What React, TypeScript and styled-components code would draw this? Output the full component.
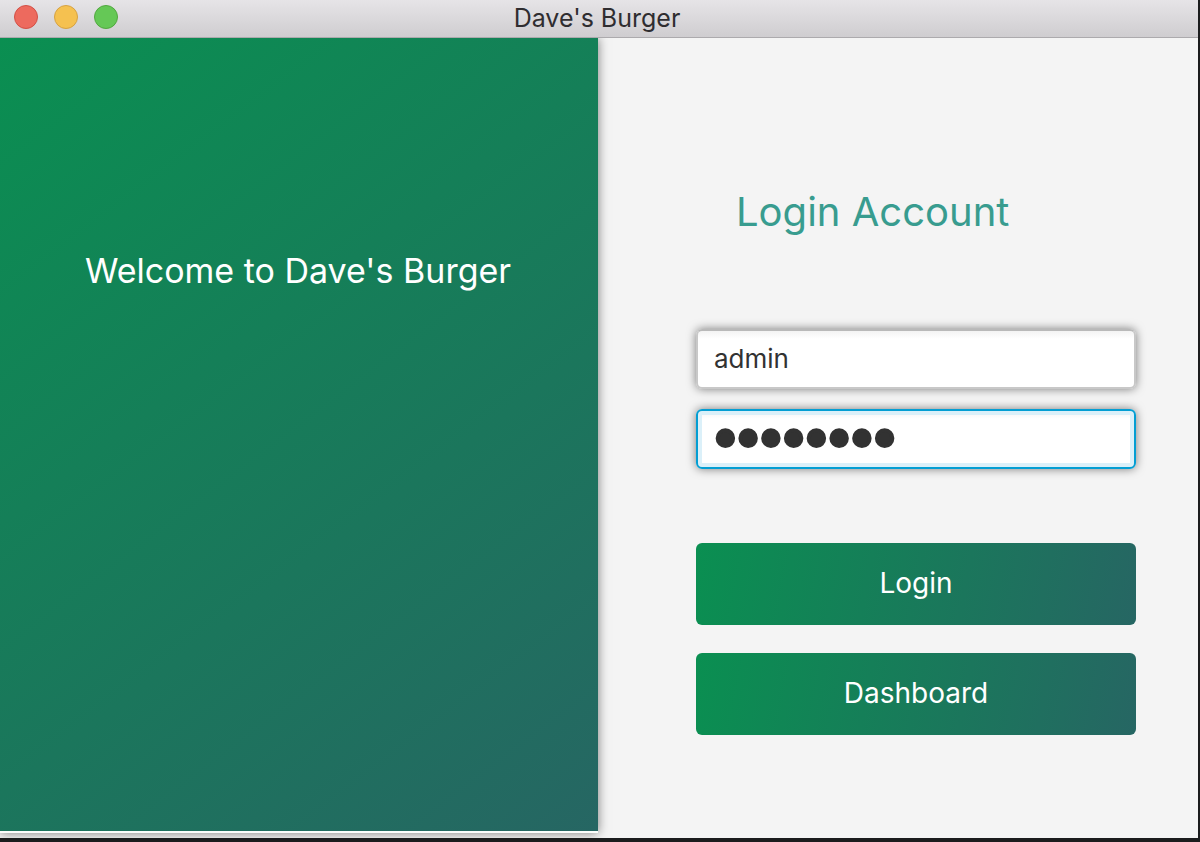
import React, { useState } from "react";
import styled, { createGlobalStyle } from "styled-components";

const GlobalStyle = createGlobalStyle`
  * { box-sizing: border-box; }
  body {
    margin: 0;
    background: #1b1c1d;
    font-family: Inter, "Liberation Sans", sans-serif;
  }
`;

const Frame = styled.div`
  min-height: 100vh;
  padding: 0 2px 4px 0;
  display: flex;
`;

const Window = styled.div`
  flex: 1;
  display: flex;
  flex-direction: column;
  background: #f4f4f4;
`;

const TitleBar = styled.header`
  height: 38px;
  padding: 0 18px 5px 14px;
  display: grid;
  grid-template-columns: 1fr auto 1fr;
  align-items: center;
  background: linear-gradient(#e6e4e7, #cfcdd0);
  border-bottom: 1px solid #acaaad;
`;

const Title = styled.h1`
  margin: 0;
  padding-top: 2px;
  font-size: 25px;
  line-height: 32px;
  font-weight: 400;
  color: #2f2d30;
`;

const Lights = styled.div`
  display: flex;
  gap: 16px;
`;

const Light = styled.button<{ $fill: string; $edge: string }>`
  width: 24px;
  height: 24px;
  padding: 0;
  border: 1px solid ${(p) => p.$edge};
  border-radius: 50%;
  background: ${(p) => p.$fill};
`;

const Body = styled.main`
  flex: 1;
  display: grid;
  grid-template-columns: 299fr 300fr;
`;

const Welcome = styled.section`
  margin-bottom: 5px;
  padding: 212px 22px 20px 20px;
  background: linear-gradient(143deg, #0a8f51, #266663) padding-box;
  border-bottom: 2px solid #fbfdfc;
  box-shadow: 0 0 10px rgba(0, 0, 0, 0.5);
  clip-path: inset(0 -20px -5px 0);
`;

const WelcomeText = styled.p`
  margin: 0;
  font-size: 34px;
  line-height: 42px;
  text-align: center;
  color: #fff;
`;

const Form = styled.form`
  padding: 150px 62px 40px 98px;
  display: flex;
  flex-direction: column;
`;

const Heading = styled.h2`
  margin: 0 0 93px 40px;
  font-size: 40px;
  line-height: 48px;
  font-weight: 400;
  color: #389c8f;
`;

const Fields = styled.div`
  display: flex;
  flex-direction: column;
  gap: 20px;
  margin-bottom: 74px;
`;

const Field = styled.input`
  width: 100%;
  height: 60px;
  padding: 0 16px 2px;
  border: 2px solid #c8c8c8;
  border-top-color: #b9b9b9;
  border-radius: 6px;
  outline: none;
  background: linear-gradient(#f3f3f3, #fff 8px);
  font-family: inherit;
  font-size: 26px;
  color: #323232;
  box-shadow: 0 0 10px rgba(0, 0, 0, 0.5);

  &:focus {
    border-color: #039ed3;
    box-shadow: 0 0 10px rgba(0, 0, 0, 0.5), inset 0 0 0 4px #dbf0f9;
  }
`;

const PasswordField = styled(Field)`
  font-family: "Liberation Serif", serif;
  font-size: 65px;
  -webkit-text-stroke: 4px #323232;
`;

const Actions = styled.div`
  display: flex;
  flex-direction: column;
  gap: 28px;
`;

const Action = styled.button`
  height: 82px;
  padding: 0 16px 2px;
  border: 0;
  border-radius: 6px;
  background: linear-gradient(101deg, #0a8f51, #266663);
  font-family: inherit;
  font-size: 28px;
  line-height: 34px;
  color: #fff;
`;

export default function App() {
  const [user, setUser] = useState("admin");
  const [password, setPassword] = useState("password");

  return (
    <>
      <GlobalStyle />
      <Frame>
        <Window>
          <TitleBar>
            <Lights>
              <Light aria-label="Close" $fill="#ed6a5e" $edge="#d35046" />
              <Light aria-label="Minimize" $fill="#f5c150" $edge="#d6a243" />
              <Light aria-label="Zoom" $fill="#65c856" $edge="#52a840" />
            </Lights>
            <Title>Dave's Burger</Title>
          </TitleBar>
          <Body>
            <Welcome>
              <WelcomeText>Welcome to Dave's Burger</WelcomeText>
            </Welcome>
            <Form onSubmit={(e) => e.preventDefault()}>
              <Heading>Login Account</Heading>
              <Fields>
                <Field
                  type="text"
                  aria-label="Username"
                  value={user}
                  onChange={(e) => setUser(e.target.value)}
                />
                <PasswordField
                  type="password"
                  aria-label="Password"
                  autoFocus
                  value={password}
                  onChange={(e) => setPassword(e.target.value)}
                />
              </Fields>
              <Actions>
                <Action type="submit">Login</Action>
                <Action type="button">Dashboard</Action>
              </Actions>
            </Form>
          </Body>
        </Window>
      </Frame>
    </>
  );
}
